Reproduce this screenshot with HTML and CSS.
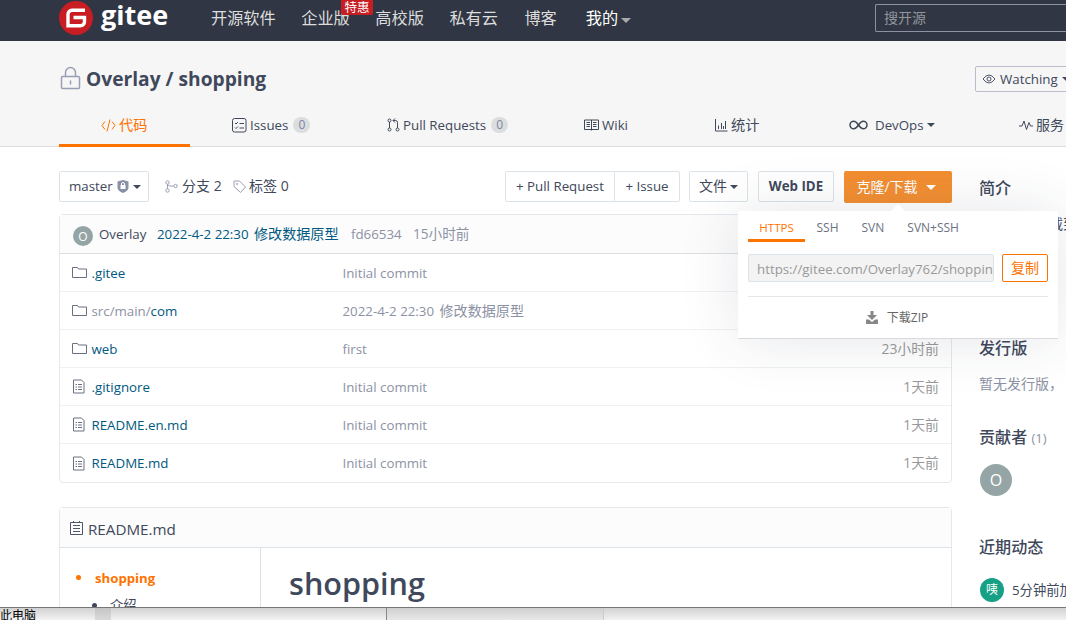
FILE: index.html
```
<!DOCTYPE html>
<html lang="zh-CN">
<head>
  <meta charset="utf-8">
  <title>Overlay/shopping - Gitee</title>
  <link rel="stylesheet" href="styles.css">
</head>
<body>

<div class="page">
  <header class="topbar">
    <a class="logo">
      <svg width="34" height="34" viewBox="0 0 34 34">
        <circle cx="17" cy="17" r="17" fill="#c71d23"/>
        <path d="M26 9.300H13a4 4 0 0 0-4 4v11.400h12.500a4 4 0 0 0 4-4v-4.200H14.500" fill="none" stroke="#fff" stroke-width="3.4"/>
      </svg>
      <span class="logo-text">gitee</span>
    </a>
    <nav class="topnav">
      <a>开源软件</a>
      <a class="ent">企业版</a>
      <a class="edu">高校版</a>
      <a>私有云</a>
      <a class="blog">博客</a>
      <a class="mine">我的<i class="caret"></i></a>
      <span class="promo">特惠</span>
    </nav>
    <div class="search">搜开源</div>
  </header>

  <section class="repo-head">
    <div class="repo-title">
      <svg class="lock" width="21" height="24" viewBox="0 0 21 24" fill="none" stroke="#9b9fb5" stroke-width="1.5">
        <rect x="1.5" y="10.5" width="18" height="12" rx="1"/>
        <path d="M5.500 10.500V6.500a5 5 0 0 1 10 0v4M10.500 14.500v4"/>
      </svg>
      <h1>Overlay / shopping</h1>
      <div class="watch">
        <svg width="14" height="10" viewBox="0 0 14 10" fill="none" stroke="#50566b">
          <path d="M1 5q6-8 12 0q-6 8-12 0z"/><circle cx="7" cy="5" r="2"/>
        </svg>
        <span>Watching</span><i class="caret"></i>
      </div>
    </div>
    <nav class="tabs">
      <a class="tab code active">
        <svg width="15" height="13" viewBox="0 0 15 13"><path d="M4 2.500L1 6.500l3 4M11 2.500l3 4-3 4M9 .5L6 12.500"/></svg>
        <span>代码</span>
      </a>
      <a class="tab issues">
        <svg width="15" height="15" viewBox="0 0 15 15"><rect x=".5" y=".5" width="13.500" height="13.500" rx="2"/><path d="M3 5l1 1 2-2M7.500 5.500H12M3 9.500l1 1 2-2M7.500 10H12"/></svg>
        <span>Issues</span><b>0</b>
      </a>
      <a class="tab pulls">
        <svg width="13" height="14" viewBox="0 0 13 14"><circle cx="2.500" cy="2.500" r="1.500"/><circle cx="2.500" cy="11.500" r="1.500"/><circle cx="10.500" cy="11.500" r="1.500"/><path d="M2.500 4v6M10.500 10V4.500q0-2-2-2H6M8 .5l-2 2 2 2"/></svg>
        <span>Pull Requests</span><b>0</b>
      </a>
      <a class="tab wiki">
        <svg width="15" height="12" viewBox="0 0 15 12"><path d="M.5 1h14v9.500H.5zM7.500 1v10.500M2.500 3.500H6M2.500 5.500H6M2.500 7.500H6M9 3.500h3.500M9 5.500h3.500M9 7.500h3.500"/></svg>
        <span>Wiki</span>
      </a>
      <a class="tab stats">
        <svg width="13" height="13" viewBox="0 0 13 13"><path d="M.5 0v12h12M3.500 6.500V10M6.500 4v6M8.500 7v3M10.500 2v8"/></svg>
        <span>统计</span>
      </a>
      <a class="tab devops">
        <svg width="19" height="10" viewBox="0 0 19 10"><path stroke-width="1.500" d="M9.500 5C7.500 2 6.500 1.200 4.800 1.200a3.800 3.800 0 0 0 0 7.600C6.500 8.800 7.500 8 9.500 5s3-3.800 4.700-3.800a3.800 3.800 0 0 1 0 7.600C12.500 8.800 11.500 8 9.500 5z"/></svg>
        <span>DevOps</span><i class="caret"></i>
      </a>
      <a class="tab service">
        <svg width="14" height="12" viewBox="0 0 14 12"><path d="M0 7h3l2-5 2.500 8.500L10 3.500l1.500 3.500H14"/></svg>
        <span>服务</span>
      </a>
    </nav>
  </section>

  <main class="content">
    <div class="left">
      <div class="toolbar">
        <a class="btn branch"><span>master</span>
          <svg width="12" height="13" viewBox="0 0 12 13"><path fill="#8a90a5" d="M6 0l5.500 1.500V8Q11 11 6 13 1 11 .5 8V1.500z"/><path fill="none" stroke="#fff" d="M4.500 5V4a1.500 1.500 0 0 1 3 0v1"/><path fill="#fff" d="M3.500 5h5v4h-5z"/></svg>
          <i class="caret"></i></a>
        <a class="meta">
          <svg width="13" height="13" viewBox="0 0 13 13"><circle cx="2.500" cy="2.500" r="1.700"/><circle cx="2.500" cy="10.500" r="1.700"/><circle cx="10.500" cy="6" r="1.700"/><path d="M2.500 4.200v4.600M2.500 4.500q1 2 6 1.700"/></svg>
          分支 2</a>
        <a class="meta tags">
          <svg width="13" height="13" viewBox="0 0 13 13"><path d="M1 1h5.500l6 6-5 5.500L1 6.500z"/><circle cx="4" cy="4" r=".6"/></svg>
          标签 0</a>
        <div class="actions">
          <div class="group"><a class="btn pr">+ Pull Request</a><a class="btn issue">+ Issue</a></div>
          <a class="btn file">文件<i class="caret"></i></a>
          <a class="btn ide">Web IDE</a>
          <div class="clone">
            <a class="clone-btn">克隆/下载<i class="caret"></i></a>
            <div class="popup">
              <div class="proto">
                <a class="on">HTTPS</a><a>SSH</a><a>SVN</a><a>SVN+SSH</a>
              </div>
              <div class="copy-row">
                <div class="url">https://gitee.com/Overlay762/shoppin</div>
                <a class="copy">复制</a>
              </div>
              <a class="zip">
                <svg width="12" height="13" viewBox="0 0 12 13" fill="#888"><path d="M4.500 0h3v4H11L6 9 1 4h3.500zM0 8.500h3l3 2.500 3-2.500h3V13H0z"/></svg>
                下载ZIP</a>
            </div>
          </div>
        </div>
      </div>

      <div class="files">
        <div class="commit">
          <span class="avatar small">O</span>
          <span class="author">Overlay</span>
          <a class="message">2022-4-2 22:30 <span class="cn">修改数据原型</span></a>
          <span class="sha">fd66534</span>
          <span class="time">15小时前</span>
        </div>
        <div class="row"><svg class="ico"><use href="#folder"/></svg><a>.gitee</a><span>Initial commit</span><time></time></div>
        <div class="row"><svg class="ico"><use href="#folder"/></svg><a><em>src/main/</em>com</a><span>2022-4-2 22:30 <span class="cn">修改数据原型</span></span><time></time></div>
        <div class="row"><svg class="ico"><use href="#folder"/></svg><a>web</a><span>first</span><time>23小时前</time></div>
        <div class="row"><svg class="ico"><use href="#file"/></svg><a>.gitignore</a><span>Initial commit</span><time>1天前</time></div>
        <div class="row"><svg class="ico"><use href="#file"/></svg><a>README.en.md</a><span>Initial commit</span><time>1天前</time></div>
        <div class="row"><svg class="ico"><use href="#file"/></svg><a>README.md</a><span>Initial commit</span><time>1天前</time></div>
      </div>

      <div class="readme">
        <div class="readme-head">
          <svg width="13" height="15" viewBox="0 0 13 15" fill="none" stroke="#50566b"><path d="M.5 1.500h12v12H.5zM3 4.500h7M3 7.500h7M3 10.500h7M3.500 0v2M9.500 0v2"/></svg>
          README.md
        </div>
        <div class="readme-body">
          <ul class="toc">
            <li class="on">shopping</li>
            <li class="sub">介绍</li>
          </ul>
          <h2>shopping</h2>
        </div>
      </div>
    </div>

    <aside class="side">
      <h3>简介</h3>
      <p class="intro">暂无描述下载到</p>
      <h3 class="release">发行版</h3>
      <p class="none">暂无发行版，</p>
      <h3 class="contrib">贡献者 <small>(1)</small></h3>
      <span class="avatar">O</span>
      <h3 class="recent">近期动态</h3>
      <div class="event"><span class="avatar green">咦</span><span>5分钟前加入了仓库</span></div>
    </aside>
  </main>

  <footer class="desktop">
    <div class="tree">此电脑</div>
    <div class="scroll"></div>
    <div class="pane"></div>
    <div class="pane dark"></div>
    <div class="pane last"></div>
  </footer>
</div>

<svg width="0" height="0" class="defs">
  <symbol id="folder" viewBox="0 0 15 15"><path d="M.5 2.500h5l1 1.500h8v8.500H.5z"/></symbol>
  <symbol id="file" viewBox="0 0 15 15"><path d="M1.500 1h8L12 3.500V14H1.500zM3.500 5.500H5M6 5.500h4M3.500 8H5M6 8h4M3.500 10.500H5M6 10.500h4"/></symbol>
</svg>

</body>
</html>
```

FILE: styles.css
```
* {
  box-sizing: border-box;
}

body {
  margin: 0;
  font: 13.3px/20px "Open Sans", "Noto Sans CJK SC", sans-serif;
  color: #40485b;
  background: #fff;
}

h1, h2, h3, p, ul {
  margin: 0;
  padding: 0;
}

svg {
  flex: none;
}

.page {
  width: 1066px;
  height: 620px;
  overflow: hidden;
  display: flex;
  flex-direction: column;
}

.defs {
  display: none;
}

.cn {
  margin-left: 2px;
  font-size: 14.100px;
}

.caret {
  display: inline-block;
  border: 4px solid transparent;
  border-top-color: currentColor;
  border-bottom: 0;
}

/* top bar */
.topbar {
  flex: none;
  height: 41px;
  padding-left: 59px;
  display: flex;
  background: #303643;
  color: #ddd;
}

.logo {
  display: flex;
  width: 152px;
  padding-top: 1px;
}

.logo-text {
  margin-left: 8px;
  font-size: 27px;
  font-weight: 700;
  line-height: 28px;
  color: #fff;
}

.topnav {
  position: relative;
  display: flex;
  width: 664px;
  font-size: 16.200px;
  line-height: 36px;
}

.topnav a {
  margin-right: 25.500px;
}

.promo {
  position: absolute;
  left: 130px;
  top: -1px;
  width: 32px;
  height: 16px;
  border-radius: 2px;
  background: #c71d23;
  color: #fff;
  font-size: 12.500px;
  line-height: 17px;
  text-align: center;
}

.topnav .blog {
  margin: 0 29px 0 1px;
}

.topnav .mine {
  color: #fff;
}

.mine .caret {
  margin: 0 0 1px 3px;
  border-width: 5px 5px 0;
  color: #aaa;
}

.search {
  flex: 1;
  height: 28px;
  margin-top: 4px;
  padding-left: 8px;
  border: 1px solid #8c92a4;
  border-right: 0;
  border-radius: 2px 0 0 2px;
  font-size: 14px;
  line-height: 26px;
  color: #92959c;
}

/* repo head */
.repo-head {
  flex: none;
  height: 106px;
  background: #f6f6f6;
  border-bottom: 1px solid #dcdcdc;
}

.repo-title {
  display: flex;
  height: 62px;
  padding: 25px 0 0 60px;
}

.repo-title h1 {
  flex: none;
  width: 889px;
  margin-left: 5px;
  font-size: 19.200px;
  line-height: 25px;
}

.watch {
  display: flex;
  align-items: center;
  flex: none;
  width: 110px;
  height: 26px;
  padding-left: 6px;
  border: 1px solid #b8bccb;
  border-radius: 2px;
}

.watch span {
  margin: 0 4px 0 4px;
}

.tabs {
  display: flex;
  height: 44px;
  padding-left: 59px;
}

.tab {
  display: flex;
  align-items: center;
  flex: none;
  height: 44px;
  padding-left: 42px;
}

.tab svg {
  fill: none;
  stroke: currentColor;
  margin-right: 3px;
}

.tab b {
  width: 17px;
  height: 16px;
  margin-left: 5px;
  border-radius: 8px;
  background: #dcdddd;
  color: #7987a8;
  font-size: 12px;
  font-weight: 400;
  line-height: 16px;
  text-align: center;
}

.tab.active {
  color: #fe7300;
  border-bottom: 3px solid #fe7300;
  padding-top: 3px;
}

.code { width: 131px; font-size: 14.200px; }
.issues { width: 155px; }
.pulls { width: 197px; }
.wiki { width: 131px; }
.stats { width: 134px; font-size: 14.200px; }
.devops { width: 170px; }
.service { width: 130px; font-size: 14px; }

.devops svg {
  margin-right: 7px;
}

.devops .caret {
  margin-left: 3px;
}

/* main */
.content {
  flex: none;
  display: flex;
  height: 460px;
  padding-left: 59px;
  overflow: hidden;
}

.left {
  flex: none;
  width: 893px;
  padding-top: 24px;
}

.toolbar {
  display: flex;
  height: 43px;
}

.btn {
  height: 31px;
  border: 1px solid #dce3e8;
  border-radius: 2px;
  line-height: 29px;
  text-align: center;
}

.branch {
  display: flex;
  align-items: center;
  width: 90px;
  padding-left: 9px;
  gap: 4px;
  margin-right: 16px;
}

.meta {
  display: flex;
  align-items: center;
  gap: 4px;
  height: 31px;
  width: 68px;
  padding-bottom: 1px;
  font-size: 14px;
}

.tags {
  gap: 3px;
}

.meta svg {
  fill: none;
  stroke: #9a9fb0;
}

.actions {
  display: flex;
  margin-left: auto;
}

.group {
  display: flex;
  margin-right: 9px;
}

.pr {
  width: 110px;
  border-radius: 2px 0 0 2px;
}

.issue {
  width: 66px;
  margin-left: -1px;
  border-radius: 0 2px 2px 0;
}

.file {
  width: 59px;
  margin-right: 10px;
  font-size: 14px;
  line-height: 28px;
}

.file .caret {
  margin: 0 0 2px 3px;
}

.ide {
  width: 76px;
  margin-right: 10px;
  font-weight: 700;
}

.clone {
  position: relative;
}

.clone-btn {
  display: block;
  width: 108px;
  height: 32px;
  padding-right: 4px;
  border-radius: 2px;
  background: #f28e31;
  color: #fff;
  font-size: 14px;
  line-height: 32px;
  text-align: center;
}

.clone-btn .caret {
  margin: 0 0 2px 8px;
  border-width: 5px 5px 0;
}

.popup {
  position: absolute;
  z-index: 2;
  left: -106px;
  top: 40px;
  width: 320px;
  height: 128px;
  padding: 0 10px;
  background: #fff;
  border-bottom: 1px solid #d8dadd;
  box-shadow: 0 0 60px rgba(40, 50, 70, .12);
}

.popup::before {
  content: "";
  position: absolute;
  left: 155px;
  top: -5px;
  width: 10px;
  height: 10px;
  background: #fff;
  transform: rotate(45deg);
}

.proto {
  display: flex;
  height: 31px;
  font-size: 12px;
  line-height: 33px;
  color: #6c7283;
}

.proto a {
  margin: 0 11.500px;
}

.proto .on {
  width: 57px;
  margin: 0;
  border-bottom: 3px solid #fe7300;
  color: #fe7300;
  font-size: 11.500px;
  text-align: center;
}

.copy-row {
  display: flex;
  gap: 8px;
  height: 55px;
  padding-top: 12px;
  border-bottom: 1px solid #e6e7ea;
}

.url {
  width: 246px;
  height: 28px;
  padding-left: 8px;
  border: 1px solid #dce3e8;
  border-radius: 2px;
  background: #f3f3f3;
  color: #999;
  line-height: 28px;
  white-space: nowrap;
}

.copy {
  width: 46px;
  height: 28px;
  border: 1px solid #fe7300;
  border-radius: 2px;
  color: #fe7300;
  font-size: 14px;
  line-height: 26px;
  text-align: center;
}

.zip {
  display: flex;
  justify-content: center;
  align-items: center;
  gap: 9px;
  height: 41px;
  padding-right: 2px;
  font-size: 12px;
  color: #666;
}

.files {
  height: 269px;
  border: 1px solid #e3e9ed;
  border-radius: 4px;
}

.commit {
  display: flex;
  align-items: center;
  height: 39px;
  padding-left: 13px;
  background: #fcfcfc;
  border-bottom: 1px solid #dce0e4;
}

.avatar {
  display: block;
  width: 32px;
  height: 32px;
  border-radius: 50%;
  background: #95a5a6;
  color: #fff;
  font-size: 16px;
  line-height: 32px;
  text-align: center;
}

.avatar.small {
  width: 20px;
  height: 20px;
  margin: 3px 6px 0 0;
  font-size: 12px;
  line-height: 21px;
}

.author {
  width: 58px;
}

.message {
  width: 194px;
  color: #005980;
}

.sha {
  width: 62px;
  color: #8c92a4;
}

.time {
  color: #8c92a4;
  font-size: 13.600px;
}

.row {
  display: flex;
  align-items: center;
  height: 38px;
  padding: 0 12px;
  border-bottom: 1px solid #f0f1f2;
}

.row:last-child {
  border-bottom: 0;
}

.ico {
  width: 15px;
  height: 15px;
  margin-right: 4.500px;
  fill: none;
  stroke: #6a7080;
}

.row a {
  width: 251px;
  color: #005980;
}

.row em {
  font-style: normal;
  color: #8c92a4;
}

.row span {
  color: #8c92a4;
}

.row time {
  margin-left: auto;
  font-size: 13.900px;
  color: #999;
}

.readme {
  height: 140px;
  margin-top: 24px;
  border: 1px solid #e3e9ed;
  border-radius: 4px;
}

.readme-head {
  display: flex;
  align-items: center;
  gap: 5px;
  height: 40px;
  padding: 2px 0 0 10px;
  background: #fcfcfc;
  border-bottom: 1px solid #dce3e8;
  font-size: 15.200px;
}

.readme-body {
  display: flex;
}

.toc {
  width: 201px;
  height: 100px;
  padding: 17px 0 0 16px;
  border-right: 1px solid #dce3e8;
  list-style: none;
}

.toc li {
  display: flex;
  align-items: center;
  line-height: 27px;
}

.toc li::before {
  content: "";
  width: 5px;
  height: 5px;
  margin: 0 14px 2px 0;
  border-radius: 50%;
  background: currentColor;
}

.toc .on {
  font-size: 13.200px;
  color: #fe7300;
  font-weight: 700;
}

.toc .sub {
  margin-left: 16px;
}

.toc .sub::before {
  margin: 0 13px 0 0;
}

.readme h2 {
  margin-left: 28px;
  font-size: 30.600px;
  font-weight: 600;
  line-height: 71px;
}

/* right column */
.side {
  flex: none;
  width: 260px;
  padding: 29px 0 0 27px;
  white-space: nowrap;
}

.side h3 {
  font-size: 16.100px;
  font-weight: 500;
  line-height: 24px;
}

.intro {
  height: 136px;
  padding-top: 14px;
  font-size: 14px;
}

.none {
  height: 65px;
  padding-top: 14px;
  font-size: 14px;
  color: #8c92a4;
}

.side small {
  font-size: 13px;
  font-weight: 400;
  color: #8c92a4;
}

.side .avatar {
  margin: 14px 0 0 1px;
}

.side .recent {
  margin-top: 39px;
}

.event {
  display: flex;
  align-items: center;
  gap: 8px;
  margin-top: 19px;
}

.side .green {
  width: 24px;
  height: 24px;
  margin: 0 0 0 1px;
  background: #16a085;
  font-size: 12px;
  line-height: 24px;
}

/* window behind the browser */
.desktop {
  flex: none;
  display: flex;
  height: 13px;
  border-top: 1px solid #777;
  background: linear-gradient(#d2d2d2, #f2f2f2);
  overflow: hidden;
}

.tree {
  width: 95px;
  font-size: 12px;
  line-height: 15px;
  color: #000;
}

.scroll {
  width: 16px;
  background: linear-gradient(#c4c4c4, #dadada);
}

.pane {
  width: 275px;
}

.pane.dark {
  width: 218px;
  border-left: 1px solid #888;
  border-right: 1px solid #ccc;
  background: linear-gradient(#cfcfcf, #e8e8e8);
}

.last {
  flex: 1;
}
```
